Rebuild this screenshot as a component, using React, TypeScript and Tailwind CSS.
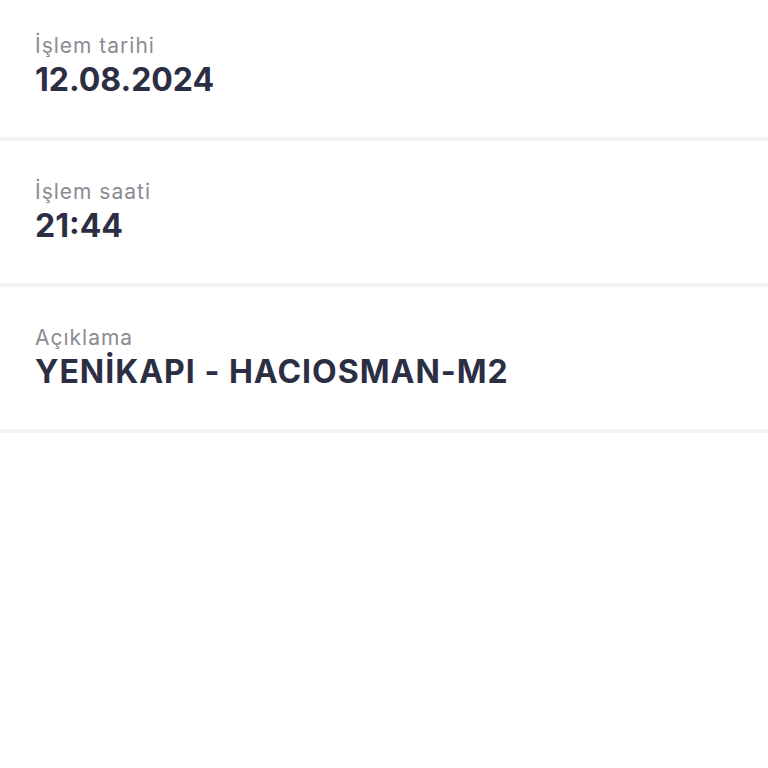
import React from "react";

const rows = [
  { label: "İşlem tarihi", value: "12.08.2024", vcls: "tracking-[0px]" },
  { label: "İşlem saati", value: "21:44", vcls: "tracking-[0px]" },
  { label: "Açıklama", value: "YENİKAPI - HACIOSMAN-M2", vcls: "tracking-[1px]" },
];

export default function App() {
  return (
    <div
      className="w-[768px] h-[768px] bg-white overflow-hidden"
      style={{ fontFamily: "Inter, 'Noto Sans', sans-serif" }}
    >
      {rows.map((r, i) => (
        <div key={i}>
          <div className={`${i === 0 ? "pt-[33px]" : "pt-[38px]"} pb-[38px] pl-[35px]`}>
            <div className="text-[21px] leading-[25px] tracking-[1px] text-[#8b8b93]">{r.label}</div>
            <div className={`mt-[3px] text-[32px] leading-[38px] font-bold text-[#2c2e44] ${r.vcls}`}>
              {r.value}
            </div>
          </div>
          <div className="h-[4px] bg-[#f3f3f5]" />
        </div>
      ))}
    </div>
  );
}
